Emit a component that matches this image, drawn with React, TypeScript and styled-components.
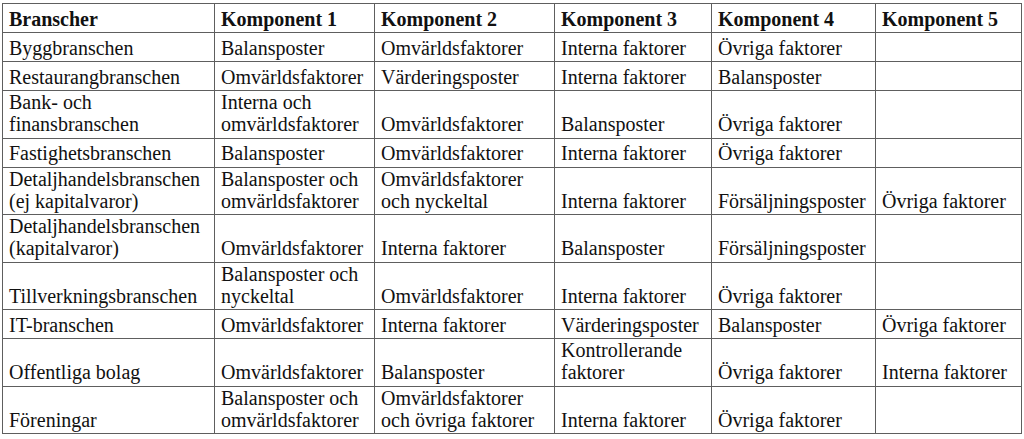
import React from "react";
import styled, { createGlobalStyle } from "styled-components";

const GlobalStyle = createGlobalStyle`
  html, body {
    margin: 0;
    padding: 0;
    background: #ffffff;
  }
`;

const Page = styled.div`
  padding: 3px 0 0 2px;
`;

const Table = styled.table`
  width: 1019px;
  table-layout: fixed;
  border-collapse: collapse;
  font-family: "Liberation Serif", "Times New Roman", serif;
  font-size: 20px;
  color: #111111;
`;

const Row = styled.tr`
  height: 29px;
`;

const Cell = styled.td`
  border: 1px solid #5e5e5e;
  padding: 0 4px 2px 6px;
  line-height: 22.25px;
  vertical-align: bottom;
  white-space: nowrap;
  overflow: hidden;
`;

const HeadCell = styled(Cell).attrs({ as: "th" })`
  font-weight: bold;
  text-align: left;
`;

const columns = [212, 160, 180, 157, 164, 146];

const headers = [
  "Branscher",
  "Komponent 1",
  "Komponent 2",
  "Komponent 3",
  "Komponent 4",
  "Komponent 5",
];

// each cell is a list of lines, as they break in the original document
const rows: string[][][] = [
  [["Byggbranschen"], ["Balansposter"], ["Omvärldsfaktorer"], ["Interna faktorer"], ["Övriga faktorer"], []],
  [["Restaurangbranschen"], ["Omvärldsfaktorer"], ["Värderingsposter"], ["Interna faktorer"], ["Balansposter"], []],
  [["Bank- och", "finansbranschen"], ["Interna och", "omvärldsfaktorer"], ["Omvärldsfaktorer"], ["Balansposter"], ["Övriga faktorer"], []],
  [["Fastighetsbranschen"], ["Balansposter"], ["Omvärldsfaktorer"], ["Interna faktorer"], ["Övriga faktorer"], []],
  [
    ["Detaljhandelsbranschen", "(ej kapitalvaror)"],
    ["Balansposter och", "omvärldsfaktorer"],
    ["Omvärldsfaktorer", "och nyckeltal"],
    ["Interna faktorer"],
    ["Försäljningsposter"],
    ["Övriga faktorer"],
  ],
  [["Detaljhandelsbranschen", "(kapitalvaror)"], ["Omvärldsfaktorer"], ["Interna faktorer"], ["Balansposter"], ["Försäljningsposter"], []],
  [["Tillverkningsbranschen"], ["Balansposter och", "nyckeltal"], ["Omvärldsfaktorer"], ["Interna faktorer"], ["Övriga faktorer"], []],
  [["IT-branschen"], ["Omvärldsfaktorer"], ["Interna faktorer"], ["Värderingsposter"], ["Balansposter"], ["Övriga faktorer"]],
  [["Offentliga bolag"], ["Omvärldsfaktorer"], ["Balansposter"], ["Kontrollerande", "faktorer"], ["Övriga faktorer"], ["Interna faktorer"]],
  [
    ["Föreningar"],
    ["Balansposter och", "omvärldsfaktorer"],
    ["Omvärldsfaktorer", "och övriga faktorer"],
    ["Interna faktorer"],
    ["Övriga faktorer"],
    [],
  ],
];

const Lines = ({ lines }: { lines: string[] }) => (
  <>
    {lines.map((line, i) => (
      <React.Fragment key={i}>
        {i > 0 && <br />}
        {line}
      </React.Fragment>
    ))}
  </>
);

const App = () => {
  return (
    <>
      <GlobalStyle />
      <Page>
        <Table>
          <colgroup>
            {columns.map((w, i) => (
              <col key={i} style={{ width: w }} />
            ))}
          </colgroup>
          <thead>
            <Row>
              {headers.map((h) => (
                <HeadCell key={h}>{h}</HeadCell>
              ))}
            </Row>
          </thead>
          <tbody>
            {rows.map((row, r) => (
              <Row key={r}>
                {row.map((cell, c) => (
                  <Cell key={c}>
                    <Lines lines={cell} />
                  </Cell>
                ))}
              </Row>
            ))}
          </tbody>
        </Table>
      </Page>
    </>
  );
};

export default App;
